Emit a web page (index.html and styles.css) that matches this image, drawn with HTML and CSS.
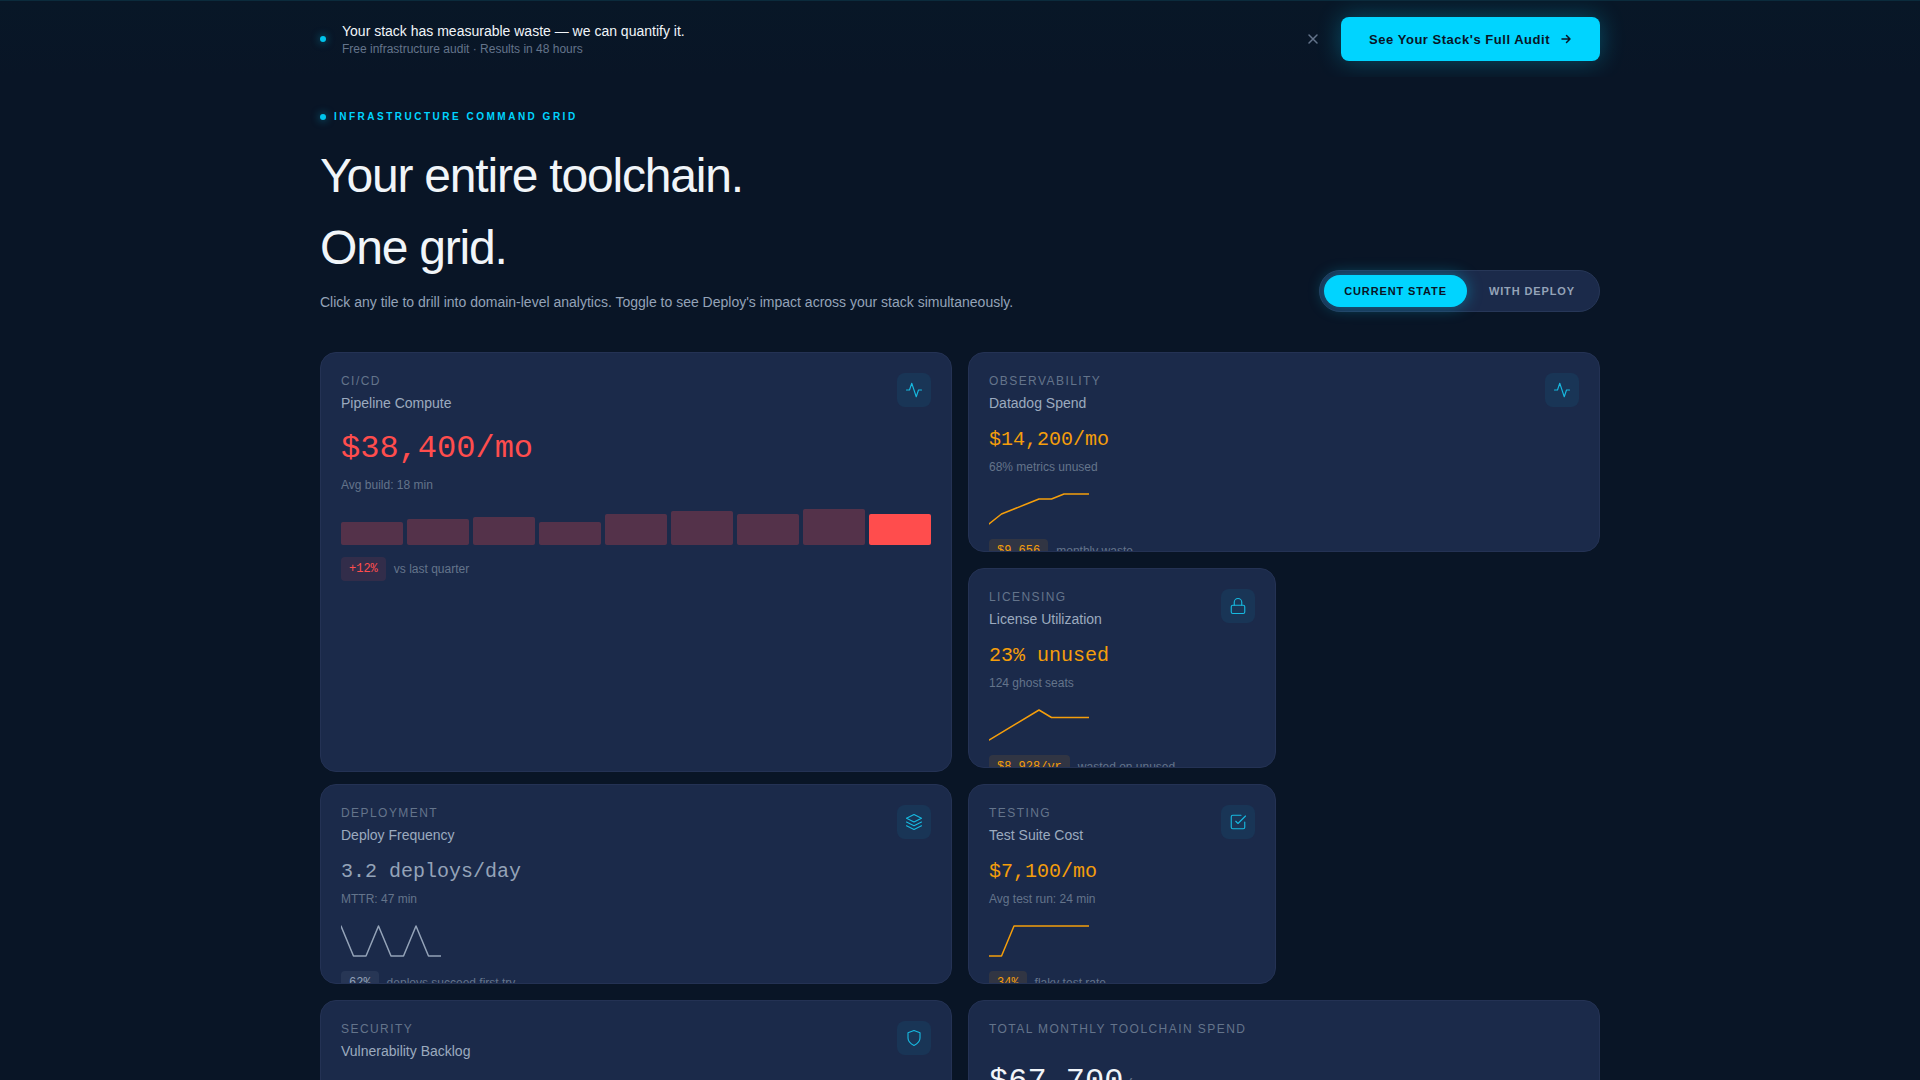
FILE: index.html
```html
<!DOCTYPE html>
<html lang="en">
	<head>
		<meta charset="utf-8">
		<meta name="viewport" content="width=device-width, initial-scale=1">
		<title>Infrastructure Command Grid</title>
		<link rel="stylesheet" href="styles.css">
	</head>
	<body>
		<aside class="banner">
			<div class="wrap banner-inner">
				<span class="dot"></span>
				<div class="banner-text">
					<p class="banner-title">Your stack has measurable waste — we can quantify it.</p>
					<p class="banner-sub">Free infrastructure audit · Results in 48 hours</p>
				</div>
				<button type="button" class="close" aria-label="Dismiss">
					<svg width="14" height="14" viewBox="0 0 14 14"><path d="M3 3l8 8M11 3l-8 8"/></svg>
				</button>
				<button type="button" class="cta">
					See Your Stack's Full Audit
					<svg width="12" height="12" viewBox="0 0 12 12"><path d="M2 6h8M6.500 2.500L10 6l-3.500 3.500"/></svg>
				</button>
			</div>
		</aside>

		<main class="wrap">
			<header class="intro">
				<div>
					<p class="eyebrow"><span class="dot"></span>Infrastructure Command Grid</p>
					<h1>Your entire toolchain.<br>One grid.</h1>
					<p class="lead">Click any tile to drill into domain-level analytics. Toggle to see Deploy's impact across your stack simultaneously.</p>
				</div>
				<div class="toggle">
					<button type="button" class="active" aria-pressed="true">Current State</button>
					<button type="button" aria-pressed="false">With Deploy</button>
				</div>
			</header>

			<section class="grid">
				<article class="tile big red">
					<div class="tile-head">
						<div>
							<p class="label">CI/CD</p>
							<h2>Pipeline Compute</h2>
						</div>
						<span class="icon"><svg viewBox="0 0 24 24"><path d="M22 12h-4l-3 9L9 3l-3 9H2"/></svg></span>
					</div>
					<p class="value">$38,400/mo</p>
					<p class="note">Avg build: 18 min</p>
					<div class="bars">
						<i style="height:58%"></i>
						<i style="height:65%"></i>
						<i style="height:70%"></i>
						<i style="height:58%"></i>
						<i style="height:78%"></i>
						<i style="height:85%"></i>
						<i style="height:78%"></i>
						<i style="height:90%"></i>
						<i style="height:78%"></i>
					</div>
					<p class="foot"><span class="badge">+12%</span>vs last quarter</p>
				</article>

				<article class="tile wide amber">
					<div class="tile-head">
						<div>
							<p class="label">Observability</p>
							<h2>Datadog Spend</h2>
						</div>
						<span class="icon"><svg viewBox="0 0 24 24"><path d="M22 12h-4l-3 9L9 3l-3 9H2"/></svg></span>
					</div>
					<p class="value">$14,200/mo</p>
					<p class="note">68% metrics unused</p>
					<svg class="spark" viewBox="0 0 100 32"><path d="M0 31L12.500 21L25 16L37.500 11L50 6H62.500L75 1H100"/></svg>
					<p class="foot"><span class="badge">$9,656</span>monthly waste</p>
				</article>

				<article class="tile amber">
					<div class="tile-head">
						<div>
							<p class="label">Licensing</p>
							<h2>License Utilization</h2>
						</div>
						<span class="icon"><svg viewBox="0 0 24 24"><rect x="3" y="11" width="18" height="11" rx="2"/><path d="M7 11V7a5 5 0 0 1 10 0v4"/></svg></span>
					</div>
					<p class="value">23% unused</p>
					<p class="note">124 ghost seats</p>
					<svg class="spark" viewBox="0 0 100 32"><path d="M0 31L50 1L62.500 8.500H100"/></svg>
					<p class="foot"><span class="badge">$8,928/yr</span>wasted on unused</p>
				</article>

				<article class="tile wide newline">
					<div class="tile-head">
						<div>
							<p class="label">Deployment</p>
							<h2>Deploy Frequency</h2>
						</div>
						<span class="icon"><svg viewBox="0 0 24 24"><path d="M12 2L2 7l10 5 10-5-10-5zM2 17l10 5 10-5M2 12l10 5 10-5"/></svg></span>
					</div>
					<p class="value">3.2 deploys/day</p>
					<p class="note">MTTR: 47 min</p>
					<svg class="spark" viewBox="0 0 100 32"><path d="M0 1L12.500 31H25L37.500 1L50 31H62.500L75 1L87.500 31H100"/></svg>
					<p class="foot"><span class="badge">62%</span>deploys succeed first try</p>
				</article>

				<article class="tile amber">
					<div class="tile-head">
						<div>
							<p class="label">Testing</p>
							<h2>Test Suite Cost</h2>
						</div>
						<span class="icon"><svg viewBox="0 0 24 24"><path d="M9 11l3 3L22 4"/><path d="M21 12v7a2 2 0 0 1-2 2H5a2 2 0 0 1-2-2V5a2 2 0 0 1 2-2h11"/></svg></span>
					</div>
					<p class="value">$7,100/mo</p>
					<p class="note">Avg test run: 24 min</p>
					<svg class="spark" viewBox="0 0 100 32"><path d="M0 31H12.500L25 1H100"/></svg>
					<p class="foot"><span class="badge">34%</span>flaky test rate</p>
				</article>

				<article class="tile wide newline red">
					<div class="tile-head">
						<div>
							<p class="label">Security</p>
							<h2>Vulnerability Backlog</h2>
						</div>
						<span class="icon"><svg viewBox="0 0 24 24"><path d="M12 22s8-4 8-10V5l-8-3-8 3v7c0 6 8 10 8 10z"/></svg></span>
					</div>
				</article>

				<article class="tile wide total">
					<p class="label">Total Monthly Toolchain Spend</p>
					<p class="value">$67,700<small>/mo</small></p>
				</article>
			</section>
		</main>
	</body>
</html>
```

FILE: styles.css
```css
*{box-sizing:border-box; margin:0; padding:0;}
body
{
	background:#091526;
	color:#f1f5f9;
	font-family:"Liberation Sans", Arial, sans-serif;
	font-size:14px;
	line-height:22px;
	overflow:hidden;
	height:100vh;
}
button{font-family:inherit; border:0; cursor:pointer;}
svg{fill:none; stroke:currentColor; stroke-width:2; stroke-linecap:round; stroke-linejoin:round;}
.wrap{max-width:1280px; margin:0 auto;}
.dot
{
	flex:none;
	width:6px;
	height:6px;
	border-radius:50%;
	background:#00c4ec;
	box-shadow:0 0 8px rgba(0,212,255,.6);
}

/* top banner */
.banner{border-top:1px solid #0b2b3c; background:linear-gradient(#081727, #091526); overflow:hidden;}
.banner-inner{display:flex; align-items:center; padding:16px 0;}
.banner-text{flex:1; margin-left:16px;}
.banner-title{line-height:20px;}
.banner-sub{font-size:12px; line-height:16px; color:#64748b;}
.close{width:30px; height:30px; margin-right:13px; background:none; color:#64748b;}
.close svg{display:block; margin:auto; stroke-width:1.5;}
.cta
{
	display:flex;
	align-items:center;
	gap:10px;
	height:44px;
	padding:0 28px;
	border-radius:8px;
	background:#00d4ff;
	color:#091526;
	font-size:13px;
	font-weight:700;
	letter-spacing:.04em;
	box-shadow:0 0 24px rgba(0,212,255,.3);
}
.cta svg{stroke-width:1.5;}

/* heading and state switch */
.intro{display:flex; justify-content:space-between; align-items:flex-end; padding:29px 0 40px;}
.eyebrow
{
	display:flex;
	align-items:center;
	gap:8px;
	color:#00d4ff;
	font-size:10px;
	font-weight:700;
	letter-spacing:.25em;
	text-transform:uppercase;
	margin-bottom:12px;
}
h1{font-size:48px; line-height:72px; font-weight:400; letter-spacing:-.025em; margin-bottom:8px;}
.lead{line-height:20px; color:#94a3b8;}
.toggle
{
	display:flex;
	gap:2px;
	padding:4px;
	border:1px solid #273758;
	border-radius:21px;
	background:#1b2a4a;
}
.toggle button
{
	height:32px;
	padding:0 20px;
	border-radius:16px;
	background:none;
	color:#94a3b8;
	font-size:11px;
	font-weight:700;
	letter-spacing:.08em;
	text-transform:uppercase;
}
.toggle .active{background:#00d4ff; color:#091526; box-shadow:0 0 16px rgba(0,212,255,.4);}

/* tiles */
.grid{display:grid; grid-template-columns:repeat(4, 1fr); grid-auto-rows:200px; gap:16px;}
.tile
{
	--tone:#94a3b8;
	--tint:rgba(148,163,184,.1);
	padding:20px;
	border:1px solid #243254;
	border-radius:16px;
	background:#1b2a4a;
	overflow:hidden;
}
.red{--tone:#ff4d4d; --tint:rgba(255,77,77,.1);}
.amber{--tone:#f59e0b; --tint:rgba(245,158,11,.1);}
.wide{grid-column:span 2;}
.big{grid-column:span 2; grid-row:span 2; min-height:420px;}
.newline{grid-column:1 / span 2;}
.tile-head{display:flex; justify-content:space-between; align-items:flex-start; margin-bottom:16px;}
.label{font-size:12px; line-height:16px; letter-spacing:.12em; text-transform:uppercase; color:#64748b;}
h2{font-size:14px; line-height:20px; font-weight:400; color:#9caabf; margin-top:4px;}
.icon
{
	display:grid;
	place-items:center;
	width:34px;
	height:34px;
	border-radius:8px;
	background:#193556;
	color:#17b9e0;
}
.icon svg{width:18px; height:18px; stroke-width:1.5;}
.value{font-family:"Liberation Mono", monospace; font-size:20px; line-height:22px; color:var(--tone); margin-bottom:6px;}
.big .value{font-size:32px; line-height:40px;}
.note{font-size:12px; line-height:20px; color:#64748b;}
.bars{display:flex; align-items:flex-end; gap:4px; height:40px; margin-top:10px;}
.bars i{flex:1; border-radius:2px; background:var(--tone); opacity:.25;}
.bars i:last-child{opacity:1;}
.spark{display:block; width:100px; height:32px; margin:16px 0 14px; color:var(--tone); stroke-width:1.5;}
.foot{display:flex; align-items:center; gap:8px; margin-top:12px; font-size:12px; line-height:24px; color:#64748b;}
.spark + .foot{margin-top:0;}
.badge{padding:0 8px; border-radius:4px; font-family:"Liberation Mono", monospace; background:var(--tint); color:var(--tone);}
.total .value{font-size:32px; line-height:40px; margin-top:25px; color:#f1f5f9;}
.total small{font-size:16px; color:#64748b;}
```
